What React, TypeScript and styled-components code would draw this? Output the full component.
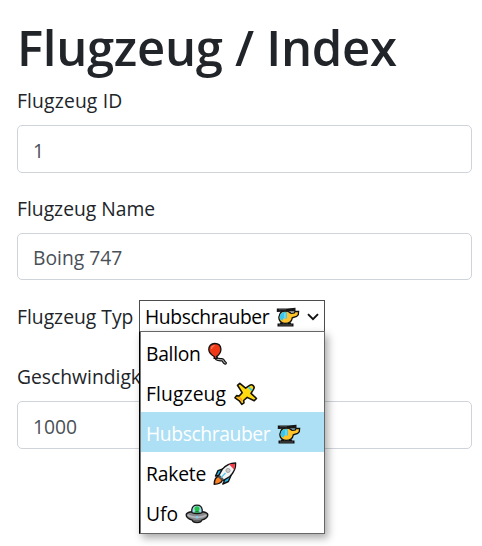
import React from "react";
import styled, { createGlobalStyle } from "styled-components";

const GlobalStyle = createGlobalStyle`
  * { box-sizing: border-box; }
  body {
    margin: 0;
    background: #fff;
    color: #212529;
    font-family: "Open Sans", "Noto Sans", sans-serif;
    font-size: 19.3px;
    font-weight: 400;
    overflow: hidden;
  }
`;

const Form = styled.form`
  display: flex;
  flex-direction: column;
  width: 472px;
  height: 546px;
  padding: 17px 0 0 17px;
`;

const Title = styled.h1`
  margin: 0 0 9px;
  height: 60px;
  line-height: 60px;
  font-size: 49px;
  font-weight: 600;
  letter-spacing: -0.3px;
  white-space: nowrap;
`;

const Field = styled.div<{ $gap: number }>`
  display: flex;
  flex-direction: column;
  margin-bottom: ${(p) => p.$gap}px;
`;

const Label = styled.label<{ $spacing?: number }>`
  height: 30px;
  line-height: 30px;
  letter-spacing: ${(p) => p.$spacing ?? 0}px;
  white-space: nowrap;
`;

const Input = styled.input<{ $height: number }>`
  width: 100%;
  height: ${(p) => p.$height}px;
  margin-top: 9px;
  padding: 2px 15px 0;
  border: 1px solid #ced4da;
  border-radius: 5px;
  background: #fff;
  color: #495057;
  font: inherit;
  outline: none;
`;

const SelectRow = styled.div`
  display: flex;
  height: 32px;
  margin-bottom: 30px;
  align-items: center;
`;

const SelectLabel = styled(Label)`
  width: 122px;
  line-height: 32px;
`;

const Select = styled.div`
  position: relative;
  width: 186px;
  height: 32px;
  color: #000;
`;

const SelectBox = styled.div`
  display: flex;
  align-items: center;
  height: 32px;
  padding: 2px 0 0 5px;
  border: 1px solid #4d4d4d;
  background: #fff;
`;

const Menu = styled.ul`
  position: absolute;
  z-index: 2;
  top: 31px;
  left: 0;
  width: 186px;
  height: 203px;
  margin: 0;
  padding: 0 0 1px;
  list-style: none;
  border: 1px solid #666;
  border-left: 1px solid #000;
  background: #fff;
  box-shadow: inset 1px 0 #777, 3px 4px 8px rgba(0, 0, 0, 0.34);
`;

const Option = styled.li<{ $active?: boolean }>`
  display: flex;
  align-items: center;
  height: 40px;
  margin-left: 1px;
  padding: 4px 0 0 5px;
  background: ${(p) => (p.$active ? "#ade0f5" : "transparent")};
  color: ${(p) => (p.$active ? "#fff" : "#000")};
`;

const OptionText = styled.span<{ $width: number; $spacing?: number }>`
  width: ${(p) => p.$width}px;
  line-height: 30px;
  letter-spacing: ${(p) => p.$spacing ?? 0}px;
  white-space: nowrap;
`;

const Icon = styled.svg`
  display: block;
  flex: none;
  width: 24px;
  height: 24px;
`;

const Chevron = styled.svg`
  display: block;
  width: 12px;
  height: 8px;
  margin: -1px 0 0 7px;
`;

const Balloon = () => (
  <Icon viewBox="0 0 24 24" fill="none" strokeLinejoin="round" strokeLinecap="round">
    <path d="M9 15.5C9 18 13 17.5 15 17.8C17 18 16 20 18.2 21" stroke="#111" strokeWidth="3.5" />
    <path d="M9 15.5C9 18 13 17.5 15 17.8C17 18 16 20 18.2 21" stroke="#bbb" strokeWidth="1.1" />
    <path d="M7.8 1.5C4 1.5 1.6 4.2 1.8 7.7C2 11.3 5.2 13.4 7.5 14.8L7 16.3H10.3L9.6 14.6C12.5 12.5 14.1 10.4 13.9 7C13.7 3.8 11.5 1.5 7.8 1.5Z" fill="#f03a17" stroke="#111" strokeWidth="1.3" />
    <path d="M4.5 6.5C4.6 5 5.6 4 7 3.7" stroke="#ff8a70" strokeWidth="1.1" />
  </Icon>
);

const Plane = () => (
  <Icon viewBox="0 0 24 24" strokeLinejoin="round" strokeLinecap="round">
    <path d="M5.8 1.3L11.6 6.2L15.6 3.4C18.2 1.6 21.3 4.4 19.6 7.1L17 11.3L22.5 16.5L20.2 18.8L13.2 15.4L9.6 18.5L10 20.8L7.8 22.4L5.3 18.8L1 15.8L2.6 13.6L5.2 14L8.2 10.6L3.5 3.3Z" fill="#ffda10" stroke="#161208" strokeWidth="1.6" />
    <path d="M2.5 15L6.2 15.2L8 16.8L8 20.3L6 17.5Z" fill="#ff9b22" />
    <path d="M15 5.6L17.5 8" stroke="#45cfe0" strokeWidth="1.8" />
  </Icon>
);

const Helicopter = () => (
  <Icon viewBox="0 0 24 24">
    <path d="M5.5 17.5V20M13.5 17.5V20M1.5 20H17.5" stroke="#111" strokeWidth="3.2" />
    <path d="M3 20H16" stroke="#666" strokeWidth=".8" />
    <path d="M4 8.8C5 6.5 8 5.5 11.2 6.2C13 6.6 14.2 8.2 15.5 8.3L18.3 8L19 6.5H22.6L22.3 9.6L20.6 11.4L16.3 12.8C15.8 16 13.2 18.3 9 18.3C4.9 18.3 2.8 15.5 2.8 12.3Z" fill="#ffc32b" stroke="#111" strokeWidth="1.3" />
    <path d="M9 7C6 6.8 3.7 9 3.7 12.2C3.7 14.5 5 15.3 7 15.3V13.5H10.8V7.2Z" fill="#39c6ef" />
    <path d="M9 8V13.5" stroke="#9be8ef" strokeWidth="1" />
    <path d="M.8 3.4H11L19.5 2.8V6.5H12L.8 7.1Z" fill="#161616" />
    <path d="M3 4.7H10" stroke="#444" />
  </Icon>
);

const Rocket = () => (
  <Icon viewBox="0 0 24 24" strokeLinejoin="round">
    <path d="M10 6.8L5 8.6L2.5 14L6.5 13.5L11.5 18.5L9.8 22L15.4 19.5L18 13.5Z" fill="#23b8ec" stroke="#111" strokeWidth="1.4" />
    <path d="M5.5 14.3C2.8 15 1.4 18 1.2 22.2C5.2 22.2 8 21.2 9.5 18.2Z" fill="#ff8126" stroke="#111" strokeWidth="1.4" />
    <path d="M22.6 1C17 1 12.4 3.6 9.2 7.4L5.7 13.7L10.5 18.3L16.8 14.5C20.2 11.2 22.9 6.5 22.6 1Z" fill="#f4f5f5" stroke="#111" strokeWidth="1.4" />
    <path d="M16 2.3L22 1.7L21.2 7.7Z" fill="#f33b49" />
    <path d="M6 13.9L10.2 18" stroke="#555" strokeWidth="2.4" />
    <path d="M12.5 11L8 15.7" stroke="#45c5ee" strokeWidth="1.2" />
    <circle cx="15" cy="8.5" r="2.1" fill="#ccc" stroke="#999" strokeWidth=".8" />
  </Icon>
);

const Ufo = () => (
  <Icon viewBox="0 0 24 24">
    <path d="M6.5 9.8C4 10.2 1.2 11 1.2 12.8C1.2 15 4.1 17.2 7.3 18.2C7.8 21.2 16.2 21.2 16.7 18.2C19.9 17.2 22.8 15 22.8 12.8C22.8 11 20 10.2 17.5 9.8Z" fill="#85878b" stroke="#171717" strokeWidth="1.4" />
    <path d="M2.8 13C7 16 17 16 21.2 13" fill="none" stroke="#b4b7ba" strokeWidth="1.8" />
    <path d="M6.8 10.5V8C7.2 1.4 16.8 1.4 17.2 8V10.5C15 12.1 9 12.1 6.8 10.5Z" fill="#a8d9ed" stroke="#171717" strokeWidth="1.3" />
    <circle cx="12" cy="6.7" r="2.5" fill="#20c443" />
    <path d="M9 10.7C9.2 8.5 14.8 8.5 15 10.7Z" fill="#158b38" />
    <circle cx="12" cy="15.2" r="1.2" fill="#86cdf1" />
    <path d="M8 18.2C10 19 14 19 16 18.2" fill="none" stroke="#555" />
  </Icon>
);

const options = [
  { name: "Ballon", width: 61, spacing: -0.3, icon: Balloon },
  { name: "Flugzeug", width: 88, spacing: 0.1, icon: Plane },
  { name: "Hubschrauber", width: 131, spacing: -0.4, icon: Helicopter },
  { name: "Rakete", width: 67, spacing: -0.2, icon: Rocket },
  { name: "Ufo", width: 39, spacing: 0, icon: Ufo },
];

export default function App() {
  return (
    <>
      <GlobalStyle />
      <Form>
        <Title>Flugzeug / Index</Title>
        <Field $gap={21}>
          <Label $spacing={0.15}>Flugzeug ID</Label>
          <Input $height={48} defaultValue="1" />
        </Field>
        <Field $gap={20}>
          <Label>Flugzeug Name</Label>
          <Input $height={47} defaultValue="Boing 747" />
        </Field>
        <SelectRow>
          <SelectLabel>Flugzeug Typ</SelectLabel>
          <Select>
            <SelectBox>
              <OptionText $width={131} $spacing={-0.4}>Hubschrauber</OptionText>
              <Helicopter />
              <Chevron viewBox="0 0 12 8">
                <path d="M1 1.2L6 6.2L11 1.2" fill="none" stroke="#111" strokeWidth="1.9" />
              </Chevron>
            </SelectBox>
            <Menu>
              {options.map(({ name, width, spacing, icon: Glyph }) => (
                <Option key={name} $active={name === "Hubschrauber"}>
                  <OptionText $width={width} $spacing={spacing}>{name}</OptionText>
                  <Glyph />
                </Option>
              ))}
            </Menu>
          </Select>
        </SelectRow>
        <Field $gap={0}>
          <Label>Geschwindigkeit</Label>
          <Input $height={48} defaultValue="1000" />
        </Field>
      </Form>
    </>
  );
}
